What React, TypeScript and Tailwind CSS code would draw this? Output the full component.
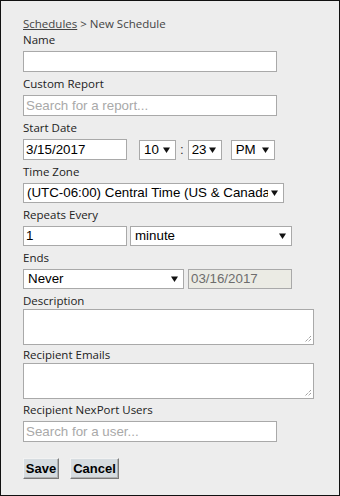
import React from "react";

const labelCls =
  "block h-[16px] leading-[16px] text-[11.5px] font-medium text-[#222] [font-family:'Open_Sans','Noto_Sans',sans-serif]";
const boxFont = "[font-family:'Liberation_Sans',Arial,sans-serif] text-[13.333px]";

function Label({ children }: { children: React.ReactNode }) {
  return <div className={labelCls}>{children}</div>;
}

function TextBox({
  w,
  h = 21,
  value,
  placeholder,
  disabled,
}: {
  w: number;
  h?: number;
  value?: string;
  placeholder?: string;
  disabled?: boolean;
}) {
  return (
    <div
      className={`border border-[#a9a9a9] flex items-center pl-[2px] ${boxFont} ${
        disabled ? "bg-[#ebebe4] text-[#6d6d6d]" : "bg-white text-black"
      }`}
      style={{ width: w, height: h }}
    >
      {value ? (
        <span>{value}</span>
      ) : placeholder ? (
        <span className="text-[#a9a9a9]">{placeholder}</span>
      ) : null}
    </div>
  );
}

function Arrow() {
  return (
    <svg width="7" height="6" viewBox="0 0 7 6" className="shrink-0">
      <path d="M0 0.5 L7 0.5 L3.5 6 Z" fill="#111" />
    </svg>
  );
}

function Select({
  w,
  value,
  pad = 4,
  clip,
}: {
  w: number;
  value: string;
  pad?: number;
  clip?: boolean;
}) {
  return (
    <div
      className={`h-[20px] border border-[#a9a9a9] bg-white flex items-center justify-between ${boxFont} text-black`}
      style={{ width: w, paddingLeft: pad, paddingRight: 5 }}
    >
      <span
        className="whitespace-nowrap overflow-hidden"
        style={clip ? { maxWidth: w - pad - 17 } : undefined}
      >
        {value}
      </span>
      <Arrow />
    </div>
  );
}

function TextArea() {
  return (
    <div className="relative w-[291px] h-[36px] border border-[#a9a9a9] bg-white">
      <svg
        width="9"
        height="9"
        viewBox="0 0 9 9"
        className="absolute right-[1px] bottom-[1px]"
      >
        <path d="M8 2 L2 8 M8 5 L5 8" stroke="#777" strokeWidth="1" strokeDasharray="1 1" />
      </svg>
    </div>
  );
}

function Button({ children, w }: { children: React.ReactNode; w: number }) {
  return (
    <div
      className="h-[21px] flex items-center justify-center bg-[#d6dce0] border border-t-[#f2f2f2] border-l-[#f2f2f2] border-r-[#7a7a7a] border-b-[#7a7a7a] [font-family:'Liberation_Sans',Arial,sans-serif] text-[13px] font-bold text-black shadow-[inset_-1px_-1px_0_#b0b0b0]"
      style={{ width: w }}
    >
      {children}
    </div>
  );
}

export default function App() {
  return (
    <div className="w-[340px] h-[496px] bg-[#ededed] border border-[#111] pl-[22px] pt-[15px] box-border">
      <div className="h-[16px] leading-[16px] text-[11.5px] text-[#444] [font-family:'Open_Sans','Noto_Sans',sans-serif]">
        <span className="underline">Schedules</span> &gt; New Schedule
      </div>

      <Label>Name</Label>
      <div className="mt-[3px]">
        <TextBox w={254} />
      </div>

      <div className="mt-[4px]">
        <Label>Custom Report</Label>
      </div>
      <div className="mt-[3px]">
        <TextBox w={254} placeholder="Search for a report..." />
      </div>

      <div className="mt-[4px]">
        <Label>Start Date</Label>
      </div>
      <div className="mt-[3px] flex items-center">
        <TextBox w={104} value="3/15/2017" />
        <div className="ml-[12px]">
          <Select w={37} value="10" />
        </div>
        <span className={`${boxFont} text-[#333] mx-[4px]`}>:</span>
        <Select w={34} value="23" pad={3} />
        <div className="ml-[9px]">
          <Select w={44} value="PM" />
        </div>
      </div>

      <div className="mt-[4px]">
        <Label>Time Zone</Label>
      </div>
      <div className="mt-[3px]">
        <Select w={261} value="(UTC-06:00) Central Time (US & Canada)" pad={3} clip />
      </div>

      <div className="mt-[4px]">
        <Label>Repeats Every</Label>
      </div>
      <div className="mt-[3px] flex items-center gap-[3px]">
        <TextBox w={104} h={20} value="1" />
        <Select w={162} value="minute" pad={4} />
      </div>

      <div className="mt-[4px]">
        <Label>Ends</Label>
      </div>
      <div className="mt-[3px] flex items-center gap-[4px]">
        <Select w={161} value="Never" pad={4} />
        <TextBox w={104} h={20} value="03/16/2017" disabled />
      </div>

      <div className="mt-[4px]">
        <Label>Description</Label>
      </div>
      <TextArea />

      <div className="mt-[2px]">
        <Label>Recipient Emails</Label>
      </div>
      <TextArea />

      <div className="mt-[3px]">
        <Label>Recipient NexPort Users</Label>
      </div>
      <div className="mt-[3px]">
        <TextBox w={254} placeholder="Search for a user..." />
      </div>

      <div className="mt-[16px] flex gap-[11px]">
        <Button w={36}>Save</Button>
        <Button w={49}>Cancel</Button>
      </div>
    </div>
  );
}
